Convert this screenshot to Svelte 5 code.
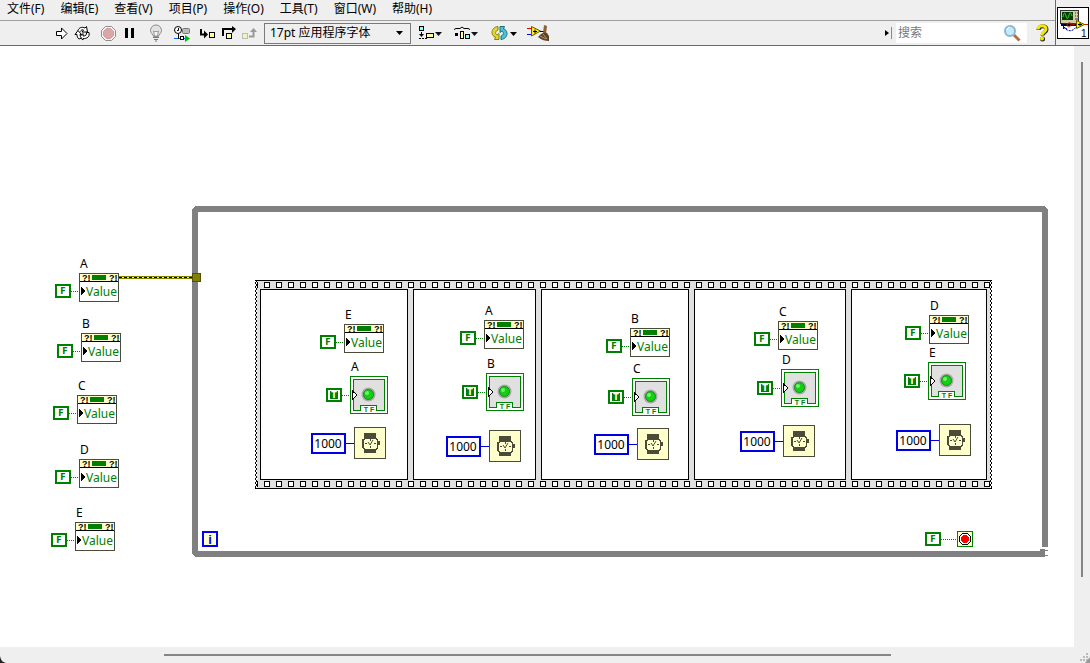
<script>
  const menus = ['文件(F)', '编辑(E)', '查看(V)', '项目(P)', '操作(O)', '工具(T)', '窗口(W)', '帮助(H)'];

  // Property nodes, each fed by a False constant
  const properties = [
    { name: 'A', x: 79, y: 273 },
    { name: 'B', x: 81, y: 333 },
    { name: 'C', x: 77, y: 395 },
    { name: 'D', x: 79, y: 459 },
    { name: 'E', x: 75, y: 522 },
    { name: 'E', x: 344, y: 324 },
    { name: 'A', x: 484, y: 320 },
    { name: 'B', x: 630, y: 328 },
    { name: 'C', x: 778, y: 321 },
    { name: 'D', x: 929, y: 315 }
  ];

  // Boolean indicators, each fed by a True constant
  const leds = [
    { name: 'A', x: 350, y: 376 },
    { name: 'B', x: 486, y: 373 },
    { name: 'C', x: 632, y: 378 },
    { name: 'D', x: 781, y: 369 },
    { name: 'E', x: 928, y: 362 }
  ];

  // Wait timers with their delay in milliseconds
  const timers = [
    { ms: 1000, x: 354, y: 427 },
    { ms: 1000, x: 489, y: 430 },
    { ms: 1000, x: 637, y: 428 },
    { ms: 1000, x: 783, y: 425 },
    { ms: 1000, x: 939, y: 424 }
  ];

  // Left edge and width of every frame in the flat sequence
  const frames = [[260, 148], [413, 123], [541, 148], [694, 152], [851, 136]];
  const holes = Array.from({ length: 61 }, (_, i) => 264 + i * 12);
</script>

{#snippet caret()}
  <path d="M17 8h7l-3.5 4z" fill="#111" />
{/snippet}

<div class="window">
  <header>
    <div class="bars">
      <nav>
        {#each menus as menu}<button class="menu">{menu}</button>{/each}
      </nav>
      <div class="toolbar">
        <div class="run">
          <button aria-label="运行">
            <svg width="18" height="18"><path d="M4.5 7.5h5v-3.5l5.5 5.5-5.500 5.500v-3.500h-5z" fill="#fff" stroke="#000" /></svg>
          </button>
          <button aria-label="连续运行">
            <svg width="18" height="18" fill="#fff" stroke="#000">
              <path d="M5 6.500C6 3.500 9 2.500 12 4l1.500-1.500L14.500 8H9l1.500-2C9 5.500 8 6 7.500 7.500" />
              <path d="M16 8.500c1 4-2 6.500-6 6v1.500L6.500 13l3.500-3.500V12c2.500 0 4-1 3.500-3.500z" />
              <path d="M2 10.500l3-4 3.500 4H7c0 1.500.5 2.500 1.500 3.500l-2.500 1c-1.500-1-2-2.500-2-4.500z" />
            </svg>
          </button>
          <button class="break" aria-label="中止执行">
            <svg width="18" height="18">
              <path d="M6.500 2.500h6l4 4v6l-4 4h-6l-4-4v-6z" fill="#f4f4f4" stroke="#8c8c8c" />
              <path d="M7.500 4.500h4l3 3v4l-3 3h-4l-3-3v-4z" fill="#dba6a6" stroke="#cf9c9c" />
            </svg>
          </button>
          <button aria-label="暂停">
            <svg width="18" height="18"><path d="M5 4h3v10H5zM11 4h3v10h-3z" /></svg>
          </button>
          <button class="break" aria-label="高亮显示执行过程">
            <svg width="18" height="18">
              <path d="M7.500 12.500c0-2-3-3-3-6a5 5 0 0 1 11 0c0 3-3 4-3 6z" fill="#e2e2e2" stroke="#8c8c8c" />
              <path d="M7.500 7l1.500 1 1-1 1 1 1.500-1-1 5h-3z" fill="#f6f6f6" stroke="#999" />
              <path d="M7 13.500h6M8 15.500h4M9 17h2" stroke="#777" />
            </svg>
          </button>
          <button class="break" aria-label="保存连线值">
            <svg width="18" height="18">
              <path d="M2 14.500h12" stroke="#06f" />
              <circle cx="6" cy="6" r="3.500" fill="#fff" stroke="#000" />
              <path d="M6.500 4v2.500H5M6.500 10v5" stroke="#000" fill="none" />
              <rect x="10.500" y="4.500" width="7" height="5" rx="1" fill="#bbb" stroke="#777" />
              <rect x="8.500" y="12.500" width="3" height="3" fill="#fff" stroke="#000" />
              <path d="M13 11l5 3.500-5 3.500z" fill="#0b0" />
            </svg>
          </button>
          <button class="break" aria-label="单步步入">
            <svg width="18" height="18">
              <path d="M3 5v5.500h5" stroke="#000" stroke-width="2" fill="none" />
              <path d="M6 6.500l4 4-4 4z" />
              <rect x="11.500" y="8.500" width="5" height="5" fill="#ffffa0" stroke="#000" />
            </svg>
          </button>
          <button aria-label="单步步过">
            <svg width="18" height="18">
              <path d="M4 12V5h10" stroke="#000" stroke-width="2" fill="none" />
              <path d="M13 2l4 3-4 4z" />
              <rect x="7.500" y="9.500" width="5" height="5" fill="#ffffa0" stroke="#000" />
            </svg>
          </button>
          <button aria-label="单步步出">
            <svg width="18" height="18">
              <rect x="2.500" y="9.500" width="5" height="5" fill="#f4f4b8" stroke="#bbb" />
              <path d="M9 12.500h4.500V7" stroke="#999" stroke-width="2" fill="none" />
              <path d="M10 8l3.500-4L17 8z" fill="#999" />
            </svg>
          </button>
        </div>
        <div class="font">
          <select aria-label="字体"><option>17pt 应用程序字体</option></select>
          <svg width="8" height="5"><path d="M0 0h7L3.500 4z" /></svg>
        </div>
        <div class="arrange">
          <button aria-label="对齐对象">
            <svg width="26" height="18">
              <rect x="1.500" y="2.500" width="4" height="4" fill="#8ff" stroke="#000" />
              <path d="M3.500 8v4M1 14.500h2M4 14.500h2M7 14.500h2" stroke="#000" />
              <path d="M1 10h5l-2.500 3z" />
              <rect x="8.500" y="9.500" width="7" height="4" fill="#ffffa0" stroke="#000" />
              {@render caret()}
            </svg>
          </button>
          <button aria-label="分布对象">
            <svg width="26" height="18">
              <path d="M0 5.500l2-1h4l2-1.500 2 1.500h4l2 1" stroke="#000" fill="none" />
              <path d="M1 9h3v3H1z" />
              <rect x="6.500" y="7.500" width="3" height="7" fill="#ffffa0" stroke="#000" />
              <rect x="11.500" y="10.500" width="4" height="4" fill="#8ff" stroke="#000" />
              {@render caret()}
            </svg>
          </button>
          <button aria-label="重新排序">
            <svg width="26" height="18">
              <path d="M8 2.500C4 3 2 5.500 2 8.500c0 2.500 1.500 4 3.500 4.500l-1 2.500H9v-6L7 11c-2-1-2-4 1-5z" fill="#e3d62c" stroke="#8a8010" />
              <path d="M11 15.500c4-.5 6-3 6-6 0-2.500-1.500-4-3.500-4.500l1-2.500H10v6L12 7c2 1 2 4-1 5z" fill="#4fc3d3" stroke="#17707c" />
              <path d="M20 8h7l-3.500 4z" />
            </svg>
          </button>
          <button aria-label="整理程序框图">
            <svg width="26" height="18">
              <path d="M1 4.500h5" stroke="#e00" /><path d="M1 10.500h5" stroke="#00e" />
              <path d="M5.500 2.500l9 4.500-9 5z" fill="#ffee20" stroke="#665a00" />
              <path d="M7 7.500h4M9 5.500v4M14 7.500h4" stroke="#000" />
              <path d="M18 1l3 1-1 8-3-1z" fill="#8b6232" />
              <path d="M12 13c3-4 6-5 9-4l2 3v5c-4 0-7-1-11-4z" fill="#5c4326" />
              <path d="M14 12l6 3M17 10l4 5" stroke="#b89665" />
            </svg>
          </button>
        </div>
        <div class="find">
          <svg width="8" height="18"><path d="M1 6l4 3-4 3z" /><path d="M7.500 3v12" stroke="#888" /></svg>
          <label>
            <input type="text" placeholder="搜索" aria-label="搜索" />
            <svg width="18" height="18">
              <path d="M11 11l5.500 5.500" stroke="#b56b3c" stroke-width="3" />
              <circle cx="7" cy="7" r="5" fill="#c4ebfb" stroke="#8fb4cf" stroke-width="2" />
              <path d="M4 6c0-2 2-3 3-3" stroke="#fff" fill="none" />
            </svg>
          </label>
          <button aria-label="即时帮助">
            <svg width="14" height="18">
              <path d="M3.500 6c0-5 8-5 8-.5 0 3-4 3-4 6" fill="none" stroke="#222" stroke-width="4" />
              <path d="M3 5.500c0-5 8-5 8-.5 0 3-4 3-4 6" fill="none" stroke="#f4e800" stroke-width="3" />
              <circle cx="7.500" cy="15" r="2.500" fill="#222" /><circle cx="7" cy="14.500" r="2" fill="#f4e800" />
            </svg>
          </button>
        </div>
      </div>
    </div>
    <button class="vi" aria-label="VI 图标">
      <svg width="32" height="32">
        <rect x="0.500" y="0.500" width="31" height="31" fill="#fff" stroke="#000" />
        <rect x="3.500" y="3.500" width="18" height="13" fill="#d6cda4" stroke="#333" />
        <path d="M4 18h18" stroke="#000" stroke-width="2" />
        <rect x="5" y="5" width="11" height="8" fill="#053b05" />
        <path d="M6 10c1-5 2-5 3-1s2 3 3-1 2-2 3 1" fill="none" stroke="#2d2" />
        <path d="M18 6h1M20 6h1M18 9h1M20 9h1M18 12h3" stroke="#333" />
        <path d="M4.500 16l2 2v4M6 20l4 2" fill="none" stroke="#00a" />
        <path d="M7 20c3 5 9 5 12 0" fill="none" stroke="#009" stroke-dasharray="2 1" />
        <path d="M10 18c1-3 5-3 4 0s-4 2-4 0M15 18l5-2M27 17.500h4" fill="none" stroke="#e01010" />
        <path d="M19.500 13.500l8 4-8 4z" fill="#ffe900" stroke="#665a00" />
        <path d="M21 17.500h4M23 16v3" stroke="#000" />
        <text x="24" y="30" class="count">1</text>
      </svg>
    </button>
  </header>

  <main>
    <svg class="diagram" viewBox="0 46 1074 601" width="1074" height="601" role="img" aria-label="程序框图">
      <defs>
        <pattern id="tear" x="255" y="280" width="2" height="4" patternUnits="userSpaceOnUse">
          <rect width="2" height="4" fill="#fff" />
          <path d="M1 0h1v2H1zM0 2h1v2H0z" />
        </pattern>
      </defs>

      <!-- While loop border -->
      <path d="M1045 547V211l-2-2H197l-2 2v341l2 2h848" class="loop" />
      <path d="M1040 549h8v2h-8zM1042 555h6v1h-6z" fill="#808080" />
      <path d="M1041 548.500h2M1045 549.500h3" stroke="#fff" />

      <!-- Flat sequence -->
      <rect x="255" y="280" width="737" height="209" fill="#e0e0e0" />
      <path d="M255 280.500h737M255 488.500h737" stroke="#000" />
      {#each holes as x}
        <rect x={x + 0.5} y="282.500" width="5" height="5" class="hole" />
        <rect x={x + 0.5} y="481.500" width="5" height="5" class="hole" />
      {/each}
      <path d="M255 282.500h2.500v5H255M255 481.500h2.500v5H255" class="hole" />
      {#each frames as [x, width]}
        <rect x={x + 0.5} y="289.500" width={width - 1} height="190" class="hole" />
      {/each}
      <rect x="255" y="281" width="2" height="207" fill="url(#tear)" />
      <rect x="990" y="281" width="2" height="207" fill="url(#tear)" />

      <!-- Reference wire into the loop -->
      <path d="M119 277.500h73" stroke="#808000" stroke-width="3" />
      <path d="M119 277.500h73" stroke="#ff3" />
      <path d="M119 277.500h73" stroke="#000" stroke-dasharray="3 2" />
      <rect x="192.500" y="273.500" width="8" height="8" fill="#808000" stroke="#505000" />

      {#each properties as node}
        <g transform="translate({node.x} {node.y})">
          <text x="1" y="-5">{node.name}</text>
          <rect x="0.500" y="0.500" width="39" height="28" fill="#fff" stroke="#4b4b3a" />
          <rect x="1" y="1" width="38" height="7" fill="#ffffcc" />
          <path d="M1 8.500h38" stroke="#000" />
          <rect x="13" y="2" width="14" height="5" fill="#008000" />
          <text x="3" y="8" class="mark">?!</text>
          <text x="30" y="8" class="mark">?!</text>
          <path d="M2 14l4 4-4 4z" />
          <text x="7" y="23" class="value">Value</text>
          <path d="M-8 18.500h8" class="bool" />
          <rect x="-23" y="12" width="14" height="12" class="const" />
          <text x="-16" y="21" class="letter">F</text>
        </g>
      {/each}

      {#each leds as led}
        <g transform="translate({led.x} {led.y})">
          <text x="1" y="-5">{led.name}</text>
          <rect x="0.500" y="0.500" width="37" height="37" fill="#fff" stroke="#008000" />
          <rect x="3.500" y="3.500" width="31" height="31" fill="#e0e0e0" stroke="#008000" />
          <circle cx="18.500" cy="18.500" r="7" fill="#a8a8a8" class="smooth" />
          <circle cx="18.500" cy="18.500" r="5" fill="#14d014" stroke="#109010" class="smooth" />
          <circle cx="17" cy="17" r="2" fill="#6cf46c" class="smooth" />
          <path d="M10.500 35v-5.500h16v5.500" fill="#fff" stroke="#008000" />
          <path d="M11 34.500h15" stroke="#fff" />
          <text x="19" y="36" class="kind">T F</text>
          <path d="M2.500 15l4.500 4-4.500 4.500z" fill="#fff" stroke="#000" />
          <path d="M-8 19.500h10" class="bool" />
          <rect x="-23" y="13" width="14" height="12" class="const" />
          <rect x="-20" y="15" width="8" height="8" fill="#008000" />
          <text x="-16" y="22" class="letter on">T</text>
        </g>
      {/each}

      {#each timers as timer}
        <g transform="translate({timer.x} {timer.y})">
          <rect x="0.500" y="0.500" width="31" height="31" fill="#ffffcc" stroke="#4b4b3a" />
          <path d="M10 6h12v5H10zM10 21h12v5H10z" fill="#4b4b3a" />
          <path d="M10 11h12v1h1v9h-1v1H10v-1H9v-9h1z" fill="#ffffcc" stroke="#4b4b3a" stroke-width="1" />
          <path d="M8 12h1v9H8zM24 12h-1v9h1zM24 14h2v4h-2zM16 12h1v2h-1zM16 19h1v2h-1zM11 16h2v1h-2zM20 16h2v1h-2z" fill="#4b4b3a" />
          <path d="M14 15l2 3 3-5" fill="none" stroke="#4b4b3a" class="smooth" />
          <path d="M-8 16.500h8" stroke="#0000d0" />
          <rect x="-42" y="7" width="33" height="19" fill="#fff" stroke="#0000e6" stroke-width="2" />
          <text x="-26" y="21" text-anchor="middle">{timer.ms}</text>
        </g>
      {/each}

      <!-- Iteration and stop terminals -->
      <rect x="203" y="532" width="14" height="14" fill="#ffffcc" stroke="#00f" stroke-width="2" />
      <text x="210" y="544" class="iteration">i</text>
      <path d="M941 539.500h16" class="bool" />
      <rect x="926" y="533" width="14" height="12" class="const" />
      <text x="933" y="542" class="letter">F</text>
      <rect x="957.500" y="531.500" width="15" height="15" fill="#ffffcc" stroke="#008000" />
      <path d="M962.500 533.500h5l3 3v5l-3 3h-5l-3-3v-5z" fill="#fff" stroke="#000" />
      <circle cx="965" cy="539" r="4" fill="#f00" />
    </svg>
  </main>
  <div class="track vertical"><span></span></div>
  <div class="track horizontal"><span></span></div>
  <svg class="grip" width="10" height="10"><path d="M6 0h2v2H6zM3 3h2v2H3zM6 3h2v2H6zM0 6h2v2H0zM3 6h2v2H3zM6 6h2v2H6z" fill="#bbb" /><path d="M10 4v6H5z" fill="#999" /></svg>
  <svg class="corner" width="6" height="7"><path d="M0 0c1 4 2 6 6 7H0z" fill="#222" /></svg>
</div>

<style>
  :global(body) { margin: 0; }
  .window {
    display: grid;
    grid-template: auto 1fr 16px / minmax(0, 1fr) 16px;
    min-height: 100vh;
    background: #efefef;
    color: #000;
    font: 12px/16px "Noto Sans", "Noto Sans CJK SC", sans-serif;
    position: relative;
  }
  button {
    display: flex;
    align-items: center;
    padding: 0;
    border: 0;
    background: none;
    color: inherit;
    font: inherit;
  }
  header {
    grid-column: 1 / -1;
    display: flex;
    border-bottom: 1px solid #696969;
  }
  .bars { flex: 1; border-right: 1px solid #696969; }
  nav {
    display: flex;
    gap: 16px;
    height: 20px;
    padding-left: 7px;
    border-bottom: 1px solid #a0a0a0;
  }
  .menu { height: 18px; white-space: nowrap; }
  .toolbar { display: flex; align-items: center; height: 24px; }
  .run { display: flex; gap: 3px; padding: 0 6px 0 52px; }
  .run .break { margin-left: 5px; }
  .font { display: grid; align-items: center; width: 147px; }
  .font > * { grid-area: 1 / 1; }
  .font svg { justify-self: end; margin-right: 7px; pointer-events: none; }
  select {
    appearance: none;
    height: 21px;
    padding: 0 5px;
    border: 1px solid #7a7a7a;
    border-radius: 0;
    background: #efefef;
    color: #000;
    font: inherit;
  }
  .arrange { display: flex; gap: 10px; padding-left: 7px; }
  .arrange svg { overflow: visible; }
  .find { display: flex; align-items: center; gap: 4px; margin-left: auto; padding-right: 6px; }
  label { display: flex; align-items: center; width: 131px; height: 20px; background: #fff; }
  label svg { flex: none; margin-right: 6px; }
  .find button { margin-left: 4px; }
  input { flex: 1; min-width: 0; padding: 0 2px; border: 0; background: none; font: inherit; }
  input::placeholder { color: #777; opacity: 1; }
  .vi { width: 34px; padding: 0 1px; }
  main { overflow: hidden; background: #fff; }
  .diagram { display: block; shape-rendering: crispEdges; }
  .loop { fill: none; stroke: #808080; stroke-width: 6; }
  .hole { fill: #fff; stroke: #000; }
  .bool { stroke: #008000; stroke-dasharray: 1 1; }
  .const { fill: #fff; stroke: #008000; stroke-width: 2; }
  .smooth { shape-rendering: auto; }
  .value { fill: #008000; }
  .mark { font: bold 9px "Liberation Sans", sans-serif; }
  .letter { fill: #008000; font: bold 8px "DejaVu Sans", sans-serif; text-anchor: middle; }
  .letter.on { fill: #fff; }
  .kind { fill: #008000; font: bold 7px "Liberation Sans", sans-serif; text-anchor: middle; }
  .iteration { fill: #00f; font: bold 13px "Liberation Sans", sans-serif; text-anchor: middle; }
  .count { font: 10px "Liberation Sans", sans-serif; }
  .track { display: grid; }
  .track span { background: #858585; }
  .vertical { grid-template: 16px 1fr 70px / 7px 2px; }
  .vertical span { grid-area: 2 / 2; }
  .horizontal { grid-template: 7px 2px / 164px 1fr 183px; }
  .horizontal span { grid-area: 2 / 2; }
  .grip { place-self: end; }
  .corner { position: absolute; left: 0; bottom: 0; }
</style>
